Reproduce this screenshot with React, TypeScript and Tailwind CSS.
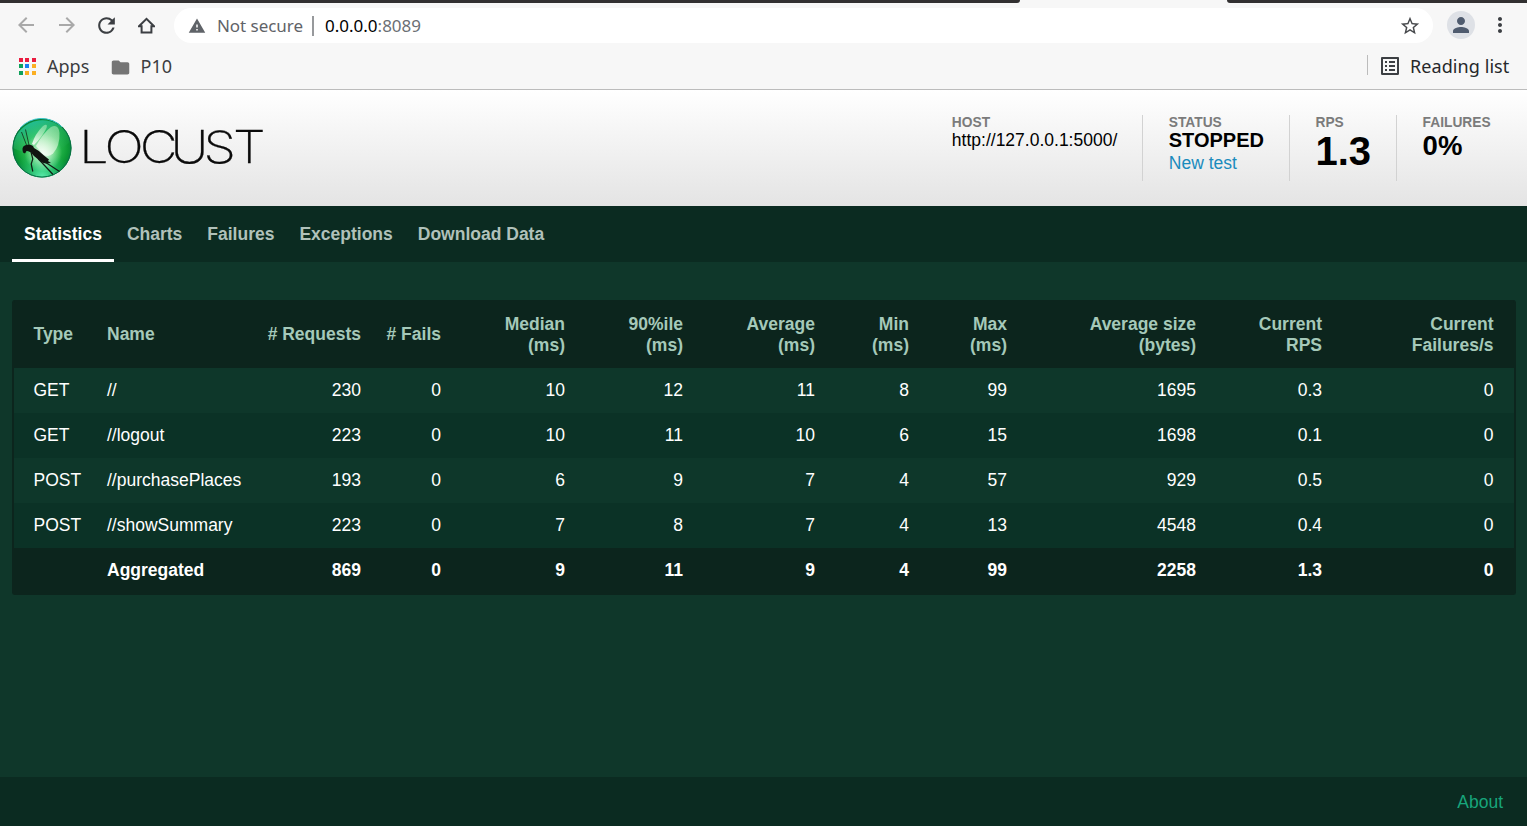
import type { ReactNode } from "react";
import {
  MdArrowBack,
  MdArrowForward,
  MdFolder,
  MdListAlt,
  MdMoreVert,
  MdPerson,
  MdRefresh,
  MdStarBorder,
  MdWarning,
} from "react-icons/md";

const APP_DOTS = [
  "bg-[#ea1c3f]", "bg-[#ea1c3f]", "bg-[#ea1c3f]",
  "bg-[#0fa15b]", "bg-[#1a80ee]", "bg-[#fbaf23]",
  "bg-[#0fa15b]", "bg-[#fbaf23]", "bg-[#fbaf23]",
];

function HomeIcon() {
  return (
    <svg className="h-[17px] w-[17px]" viewBox="0 0 17 17" fill="none" stroke="#3c3f43" strokeWidth="2">
      <path d="M1 9.2 H3.6 V15.6 H13.4 V9.2 H16 L8.5 1.8 Z" strokeLinejoin="miter" />
    </svg>
  );
}

function BrowserChrome() {
  return (
    <div className="h-[90px] shrink-0 border-b border-[#bcbcbc] bg-[#f7f7f7] font-['Noto_Sans',sans-serif]">
      <div className="flex h-[3px] justify-between">
        <div className="w-[1020px] rounded-br-[6px] bg-[#323031]" />
        <div className="w-[300px] rounded-bl-[6px] bg-[#323031]" />
      </div>
      <div className="flex h-[45px] items-center pl-[14px] pr-[15px]">
        <MdArrowBack className="mb-px h-[24px] w-[24px] text-[#a9a9a9]" />
        <MdArrowForward className="mb-px ml-[17px] h-[24px] w-[24px] text-[#a9a9a9]" />
        <MdRefresh className="mb-px ml-[15px] h-[25px] w-[25px] text-[#3c3f43]" />
        <div className="mb-px ml-[19px]"><HomeIcon /></div>
        <div className="ml-[19px] flex h-[35px] w-[1259px] items-center rounded-full bg-white pl-[14px] pr-[12px] text-[17px]">
          <MdWarning className="h-[18px] w-[18px] text-[#5f6368]" />
          <span className="ml-[11px] w-[85px] whitespace-nowrap tracking-[-0.05px] text-[17px] text-[#5f6368]">Not secure</span>
          <span className="ml-[10px] h-[20px] w-[2px] bg-[#97999c]" />
          <span className="ml-[11px] whitespace-nowrap text-black">
            0.0.0.0<span className="text-[#6b6f74]">:8089</span>
          </span>
          <MdStarBorder className="ml-auto h-[22px] w-[22px] text-[#47494c]" />
        </div>
        <div className="mb-px ml-[14px] flex h-[28px] w-[28px] shrink-0 items-center justify-center rounded-full bg-[#dee1e6]">
          <MdPerson className="h-[24px] w-[24px] text-[#4f5b6e]" />
        </div>
        <MdMoreVert className="mb-px ml-[13px] h-[24px] w-[24px] shrink-0 text-[#3c3f43]" />
      </div>
      <div className="flex h-[36px] items-center pl-[18.5px] pr-[16px] text-[18px] text-[#3c3d3f]">
        <div className="grid grid-cols-3 gap-[2.5px]">
          {APP_DOTS.map((c, i) => (
            <span key={i} className={`h-[4px] w-[4px] ${c}`} />
          ))}
        </div>
        <span className="ml-[11.5px] w-[43px] whitespace-nowrap">Apps</span>
        <MdFolder className="mt-[3px] ml-[19.5px] h-[21px] w-[21px] text-[#757575]" />
        <span className="ml-[10px]">P10</span>
        <span className="mb-[3px] ml-auto h-[20px] w-px bg-[#bcbcbc]" />
        <MdListAlt className="ml-[10px] h-[24px] w-[24px] text-[#3c3f43]" />
        <span className="ml-[8px] w-[101px] whitespace-nowrap tracking-[0.08px] text-[#26282a]">Reading list</span>
      </div>
    </div>
  );
}

function LocustLogo() {
  return (
    <svg className="h-[62px] w-[254px]" viewBox="0 0 254 62">
      <defs>
        <radialGradient id="glow" cx="0.5" cy="0.48" r="0.55">
          <stop offset="0" stopColor="#7be08c" />
          <stop offset="0.45" stopColor="#2fc254" />
          <stop offset="0.8" stopColor="#0c9a35" />
          <stop offset="1" stopColor="#087a3c" />
        </radialGradient>
        <linearGradient id="top" x1="0" y1="0" x2="0.6" y2="1">
          <stop offset="0" stopColor="#20c9c4" stopOpacity="0.95" />
          <stop offset="0.6" stopColor="#3bc584" stopOpacity="0.35" />
          <stop offset="1" stopColor="#20a850" stopOpacity="0.2" />
        </linearGradient>
        <radialGradient id="base" cx="0.5" cy="1" r="0.48">
          <stop offset="0" stopColor="#5ff0b0" />
          <stop offset="1" stopColor="#22c880" stopOpacity="0" />
        </radialGradient>
        <radialGradient id="shine" cx="0.52" cy="0.58" r="0.32">
          <stop offset="0" stopColor="#ffffff" stopOpacity="0.95" />
          <stop offset="1" stopColor="#d8ffd8" stopOpacity="0" />
        </radialGradient>
        <linearGradient id="wing" x1="0" y1="1" x2="0.6" y2="0">
          <stop offset="0" stopColor="#ffffff" stopOpacity="0.9" />
          <stop offset="1" stopColor="#c8f5c8" stopOpacity="0.5" />
        </linearGradient>
      </defs>
      <circle cx="30" cy="31" r="29.5" fill="url(#glow)" />
      <path d="M1 31 A29.5 29.5 0 0 1 58.6 24 Q50 34 34 36 Q14 38 1 31Z" fill="url(#top)" />
      <circle cx="30" cy="31" r="29.5" fill="url(#base)" />
      <circle cx="30" cy="31" r="29.5" fill="url(#shine)" />
      <circle cx="30" cy="31" r="29" fill="none" stroke="#067045" strokeWidth="1" />
      <path d="M8 11 A29 29 0 0 1 50 10" fill="none" stroke="#40cdd0" strokeWidth="1" />
      <path d="M20 27 Q23 17 31 9 Q36 5.5 34.5 11 Q31 19 22 28Z" fill="url(#wing)" />
      <path d="M24 29 Q31 16 39 10 Q46.5 6.5 47.5 16 Q48 29 41 36.5 Q36 41 31 37Z" fill="url(#wing)" />
      <path d="M10.5 33 Q10 29 14 28 Q18 26.5 21 29 L22 31 Q28 34 32 38.5 L37 42.5 L36 44 L39 46 L34 46.5 Q29 46 25 41.5 Q21.5 39 19 35.5 Q16 33.5 14.5 34 L13 36.5 L11 35.5Z" fill="#101410" />
      <path d="M14.5 28 L9.5 15 M17 28 L13.5 12.5" fill="none" stroke="#173c22" strokeWidth="0.9" />
      <path d="M19 35 L20.8 42 L19.2 47 L20.8 54.5 M26.5 42 L41 57.5 M33 45 L47.5 54.5" fill="none" stroke="#101c14" strokeWidth="1.2" />
      <text
        transform="scale(1.17 1)"
        x="57.4 79 109.2 135.4 163.6 189"
        y="46.4"
        strokeWidth="0.25"
        className="fill-[#0b0b0b] stroke-[#0b0b0b] font-['Inter',sans-serif] text-[44.5px] font-extralight"
      >
        LOCUST
      </text>
    </svg>
  );
}

function Stat({ label, last, children }: { label: string; last?: boolean; children: ReactNode }) {
  return (
    <div className={`h-[66px] ${last ? "pl-[25.5px]" : "border-r border-[#d2d2d2] pl-[25.5px] pr-[25px]"}`}>
      <div className="h-[15px] text-[13.75px] font-bold leading-[15px] text-[#7b7b7b]">{label}</div>
      {children}
    </div>
  );
}

const TABS = ["Statistics", "Charts", "Failures", "Exceptions", "Download Data"];

const COLUMNS: { lines: string[]; width: string }[] = [
  { lines: ["Type"], width: "w-[80px]" },
  { lines: ["Name"], width: "w-[160px]" },
  { lines: ["# Requests"], width: "w-[120px]" },
  { lines: ["# Fails"], width: "w-[80px]" },
  { lines: ["Median", "(ms)"], width: "w-[124px]" },
  { lines: ["90%ile", "(ms)"], width: "w-[118px]" },
  { lines: ["Average", "(ms)"], width: "w-[132px]" },
  { lines: ["Min", "(ms)"], width: "w-[94px]" },
  { lines: ["Max", "(ms)"], width: "w-[98px]" },
  { lines: ["Average size", "(bytes)"], width: "w-[189px]" },
  { lines: ["Current", "RPS"], width: "w-[126px]" },
  { lines: ["Current", "Failures/s"], width: "w-[179px]" },
];

const ROWS = [
  ["GET", "//", "230", "0", "10", "12", "11", "8", "99", "1695", "0.3", "0"],
  ["GET", "//logout", "223", "0", "10", "11", "10", "6", "15", "1698", "0.1", "0"],
  ["POST", "//purchasePlaces", "193", "0", "6", "9", "7", "4", "57", "929", "0.5", "0"],
  ["POST", "//showSummary", "223", "0", "7", "8", "7", "4", "13", "4548", "0.4", "0"],
  ["", "Aggregated", "869", "0", "9", "11", "9", "4", "99", "2258", "1.3", "0"],
];

function cellClass(i: number) {
  if (i === 0) return "pl-[19.5px] text-left";
  if (i === 1) return "pl-[13px] text-left";
  if (i === COLUMNS.length - 1) return "pr-[20.5px] text-right";
  return "pr-[13px] text-right";
}

function rowClass(i: number) {
  if (i === ROWS.length - 1) return "bg-[#0c251d] font-bold";
  return i % 2 === 0 ? "bg-[#0e372a]" : "bg-[#0b3226]";
}

function StatsTable() {
  return (
    <div className="w-[1504px] rounded-[3px] border-2 border-t-0 border-[#0c251d] bg-[#0c251d]">
      <table className="w-[1500px] table-fixed border-collapse text-[17.5px] text-white">
        <thead>
          <tr className="h-[68px] text-[#a5c9b9]">
            {COLUMNS.map((c, i) => (
              <th key={i} className={`${c.width} ${cellClass(i)} whitespace-nowrap pt-px align-middle leading-[21px]`}>
                {c.lines.map((l) => (
                  <div key={l}>{l}</div>
                ))}
              </th>
            ))}
          </tr>
        </thead>
        <tbody>
          {ROWS.map((r, i) => (
            <tr key={i} className={`h-[45px] ${rowClass(i)}`}>
              {r.map((v, j) => (
                <td key={j} className={`${cellClass(j)} whitespace-nowrap align-middle leading-[21px]`}>{v}</td>
              ))}
            </tr>
          ))}
        </tbody>
      </table>
    </div>
  );
}

export default function App() {
  return (
    <div className="flex h-[826px] w-[1527px] flex-col overflow-hidden bg-[#0f372a] font-['Liberation_Sans',sans-serif] text-[17.5px]">
      <BrowserChrome />
      <header className="flex h-[116px] shrink-0 justify-between bg-linear-to-b from-white to-[#e4e4e4] pl-[12px] pr-[36.4px] pt-[25px] text-black">
        <div className="pt-[2px]"><LocustLogo /></div>
        <div className="flex">
          <Stat label="HOST">
            <div className="leading-[21px]">http://127.0.0.1:5000/</div>
          </Stat>
          <Stat label="STATUS">
            <div className="h-[22px] text-[20px] font-bold leading-[20px]">STOPPED</div>
            <a className="block leading-[23px] text-[#1a8bbd]">New test</a>
          </Stat>
          <Stat label="RPS">
            <div className="text-[40px] font-bold leading-[42px]">1.3</div>
          </Stat>
          <Stat label="FAILURES" last>
            <div className="text-[27.5px] font-bold leading-[32px]">0%</div>
          </Stat>
        </div>
      </header>
      <nav className="flex h-[56px] shrink-0 bg-[#0b2b21] pl-[12px] font-bold">
        {TABS.map((t, i) => (
          <a
            key={t}
            className={`mr-[0.8px] h-[56px] px-[12.1px] leading-[57px] ${i === 0 ? "border-b-3 border-white text-white" : "text-[#b0c1ba]"}`}
          >
            {t}
          </a>
        ))}
      </nav>
      <main className="grow pl-[12px] pt-[38px]">
        <StatsTable />
      </main>
      <footer className="flex h-[49px] shrink-0 items-center justify-end bg-[#0b2b21] pr-[24px] pt-px text-[#17a57b]">
        About
      </footer>
    </div>
  );
}
